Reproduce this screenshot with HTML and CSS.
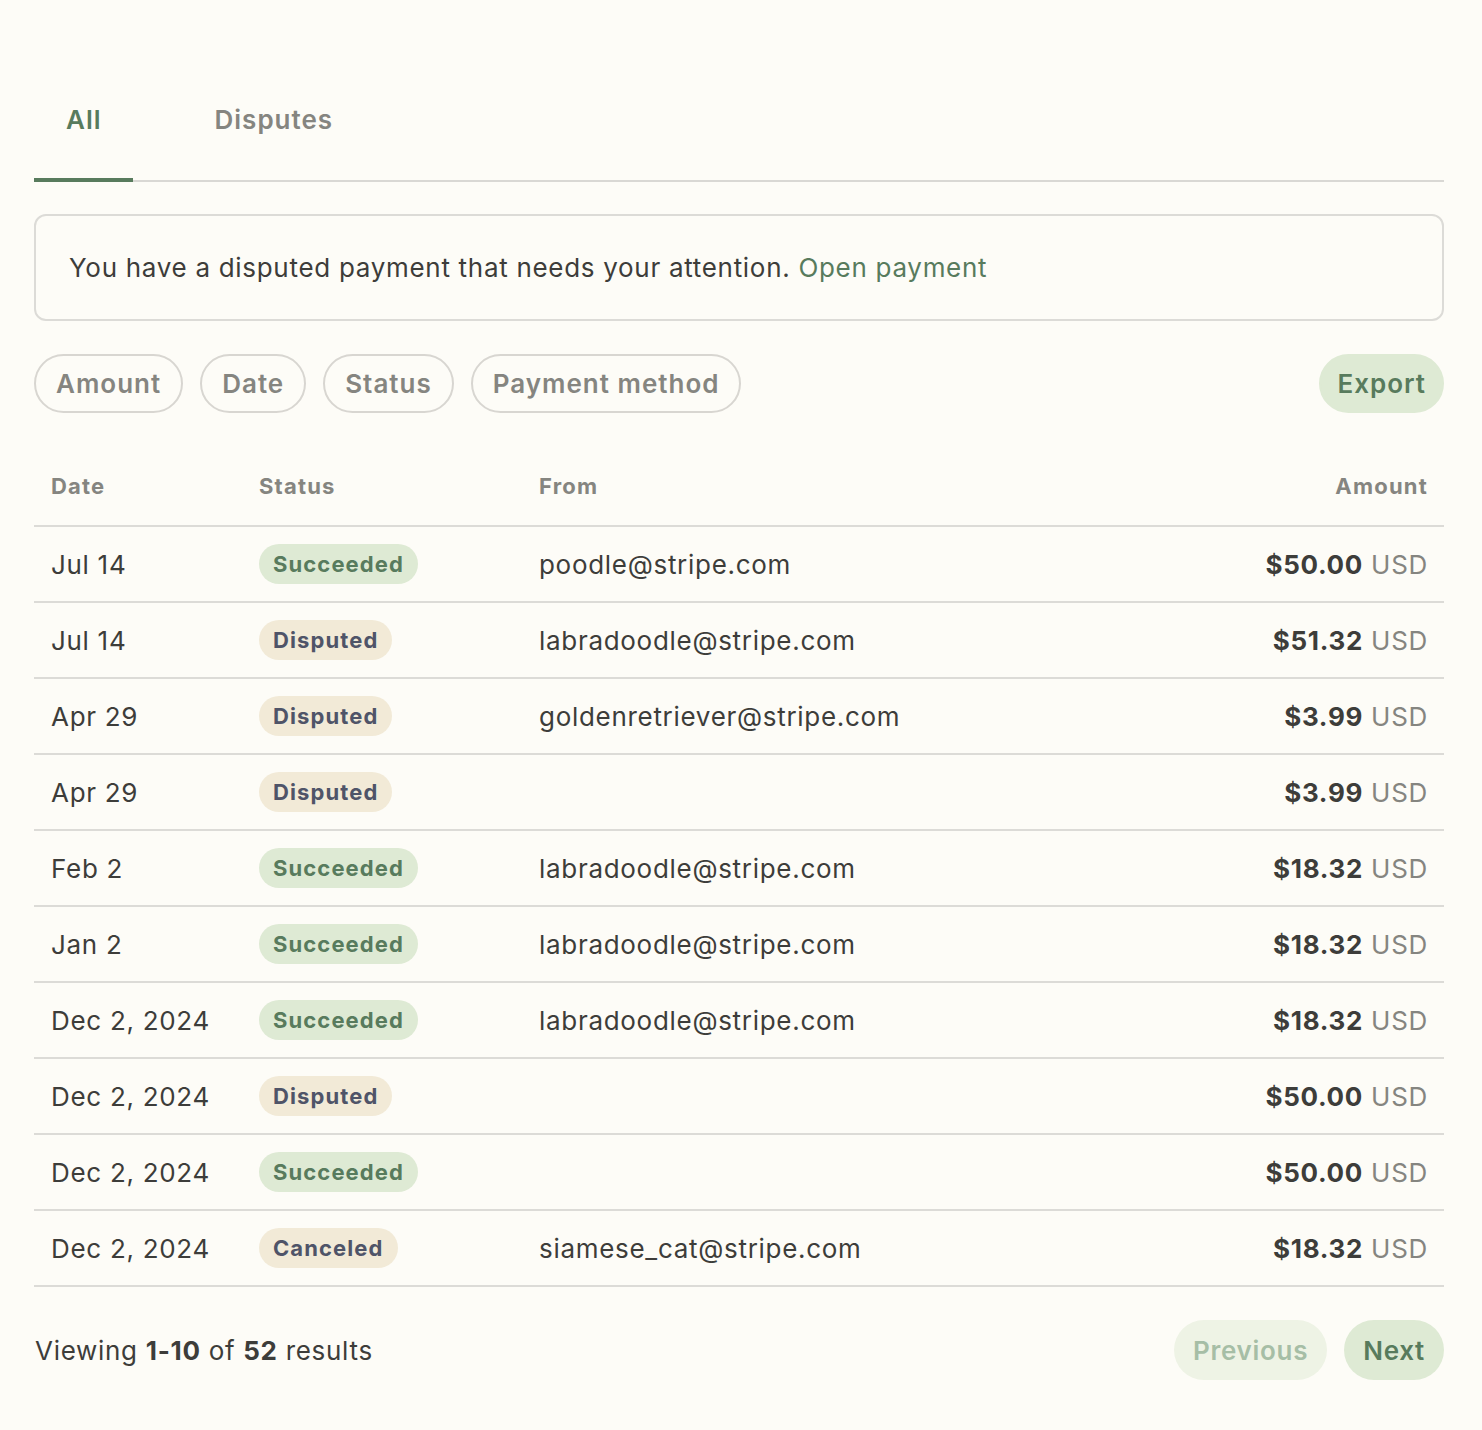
FILE: index.html
```html
<!DOCTYPE html>
<html>
<head>
<meta charset="utf-8">
<link rel="stylesheet" href="styles.css">
</head>
<body>
<div class="page">
  <nav class="tabs">
    <div class="tab active">All</div>
    <div class="tab">Disputes</div>
  </nav>

  <div class="alert">You have a disputed payment that needs your attention. <a class="alert-link">Open payment</a></div>

  <div class="filters">
    <div class="pill">Amount</div>
    <div class="pill">Date</div>
    <div class="pill">Status</div>
    <div class="pill">Payment method</div>
    <div class="spacer"></div>
    <div class="pill pill-green">Export</div>
  </div>

  <div class="table">
    <div class="row head">
      <div class="c-date">Date</div>
      <div class="c-status">Status</div>
      <div class="c-from">From</div>
      <div class="c-amount">Amount</div>
    </div>
    <div class="row">
      <div class="c-date">Jul 14</div>
      <div class="c-status"><span class="badge ok">Succeeded</span></div>
      <div class="c-from">poodle@stripe.com</div>
      <div class="c-amount"><b>$50.00</b> <span class="cur">USD</span></div>
    </div>
    <div class="row">
      <div class="c-date">Jul 14</div>
      <div class="c-status"><span class="badge warn">Disputed</span></div>
      <div class="c-from">labradoodle@stripe.com</div>
      <div class="c-amount"><b>$51.32</b> <span class="cur">USD</span></div>
    </div>
    <div class="row">
      <div class="c-date">Apr 29</div>
      <div class="c-status"><span class="badge warn">Disputed</span></div>
      <div class="c-from">goldenretriever@stripe.com</div>
      <div class="c-amount"><b>$3.99</b> <span class="cur">USD</span></div>
    </div>
    <div class="row">
      <div class="c-date">Apr 29</div>
      <div class="c-status"><span class="badge warn">Disputed</span></div>
      <div class="c-from"></div>
      <div class="c-amount"><b>$3.99</b> <span class="cur">USD</span></div>
    </div>
    <div class="row">
      <div class="c-date">Feb 2</div>
      <div class="c-status"><span class="badge ok">Succeeded</span></div>
      <div class="c-from">labradoodle@stripe.com</div>
      <div class="c-amount"><b>$18.32</b> <span class="cur">USD</span></div>
    </div>
    <div class="row">
      <div class="c-date">Jan 2</div>
      <div class="c-status"><span class="badge ok">Succeeded</span></div>
      <div class="c-from">labradoodle@stripe.com</div>
      <div class="c-amount"><b>$18.32</b> <span class="cur">USD</span></div>
    </div>
    <div class="row">
      <div class="c-date">Dec 2, 2024</div>
      <div class="c-status"><span class="badge ok">Succeeded</span></div>
      <div class="c-from">labradoodle@stripe.com</div>
      <div class="c-amount"><b>$18.32</b> <span class="cur">USD</span></div>
    </div>
    <div class="row">
      <div class="c-date">Dec 2, 2024</div>
      <div class="c-status"><span class="badge warn">Disputed</span></div>
      <div class="c-from"></div>
      <div class="c-amount"><b>$50.00</b> <span class="cur">USD</span></div>
    </div>
    <div class="row">
      <div class="c-date">Dec 2, 2024</div>
      <div class="c-status"><span class="badge ok">Succeeded</span></div>
      <div class="c-from"></div>
      <div class="c-amount"><b>$50.00</b> <span class="cur">USD</span></div>
    </div>
    <div class="row">
      <div class="c-date">Dec 2, 2024</div>
      <div class="c-status"><span class="badge warn">Canceled</span></div>
      <div class="c-from">siamese_cat@stripe.com</div>
      <div class="c-amount"><b>$18.32</b> <span class="cur">USD</span></div>
    </div>
  </div>

  <div class="footer">
    <div class="count">Viewing <b>1-10</b> of <b>52</b> results</div>
    <div class="pager">
      <div class="btn btn-disabled">Previous</div>
      <div class="btn btn-green">Next</div>
    </div>
  </div>
</div>
</body>
</html>
```

FILE: styles.css
```css
html, body {
  margin: 0;
  padding: 0;
  background: #fdfcf7;
}
body {
  font-family: Inter, "Noto Sans", "Liberation Sans", sans-serif;
  color: #3d3d3a;
  letter-spacing: 0.7px;
}
.page {
  padding: 86px 38px 0 34px;
}
.tabs {
  display: flex;
  gap: 50px;
  border-bottom: 2px solid #d9d8d4;
}
.tab {
  box-sizing: border-box;
  height: 96px;
  padding: 21px 32px 0;
  margin-bottom: -2px;
  font-size: 26px;
  font-weight: 600;
  letter-spacing: 1px;
  line-height: 1;
  color: #858580;
}
.tab.active {
  color: #587b5d;
  padding: 21px 31px 0 32px;
  border-bottom: 4px solid #587b5d;
}
.alert {
  margin-top: 32px;
  border: 2px solid #dcdbd7;
  border-radius: 12px;
  padding: 0 33px;
  height: 107px;
  box-sizing: border-box;
  display: flex;
  align-items: center;
  font-size: 26px;
  color: #3d3d3a;
}
.alert-link {
  color: #587b5d;
  margin-left: 8px;
}
.filters {
  margin-top: 33px;
  display: flex;
  gap: 17px;
  align-items: center;
}
.spacer { flex: 1; }
.pill {
  height: 59px;
  box-sizing: border-box;
  border: 2px solid #d8d6d1;
  border-radius: 30px;
  padding: 0 20px;
  display: flex;
  align-items: center;
  font-size: 26px;
  font-weight: 600;
  letter-spacing: 1px;
  color: #858580;
}
.pill-green {
  background: #deead4;
  border-color: #deead4;
  color: #587b5d;
  padding: 0 16px;
}
.row {
  display: grid;
  grid-template-columns: 208px 280px 1fr auto;
  align-items: center;
  box-sizing: border-box;
  height: 76px;
  border-bottom: 2px solid #dcdbd7;
  font-size: 26px;
  color: #3d3d3a;
  padding: 0 16px 0 17px;
}
.row.head {
  height: 114px;
  padding-top: 34px;
  font-size: 22px;
  font-weight: 700;
  letter-spacing: 1.2px;
  color: #858580;
}
.c-amount { text-align: right; }
.c-amount b { font-weight: 700; color: #3d3d3a; }
.cur { color: #858580; }
.badge {
  display: inline-flex;
  align-items: center;
  height: 40px;
  padding: 0 14px;
  border-radius: 20px;
  font-size: 22px;
  font-weight: 700;
  letter-spacing: 1.1px;
}
.badge.ok { background: #deead4; color: #587b5d; }
.badge.warn { background: #f2ead7; color: #4f5468; }
.footer {
  display: flex;
  align-items: center;
  justify-content: space-between;
  margin-top: 33px;
}
.count {
  font-size: 26px;
  color: #3d3d3a;
  padding-left: 1px;
}
.count b { font-weight: 700; }
.pager {
  display: flex;
  gap: 17px;
}
.btn {
  height: 60px;
  border-radius: 30px;
  padding: 0 19px;
  display: flex;
  align-items: center;
  font-size: 26px;
  font-weight: 600;
  letter-spacing: 0.7px;
}
.btn-disabled { background: #eef3e5; color: #a6bea6; }
.btn-green { background: #deead4; color: #587b5d; }
```
